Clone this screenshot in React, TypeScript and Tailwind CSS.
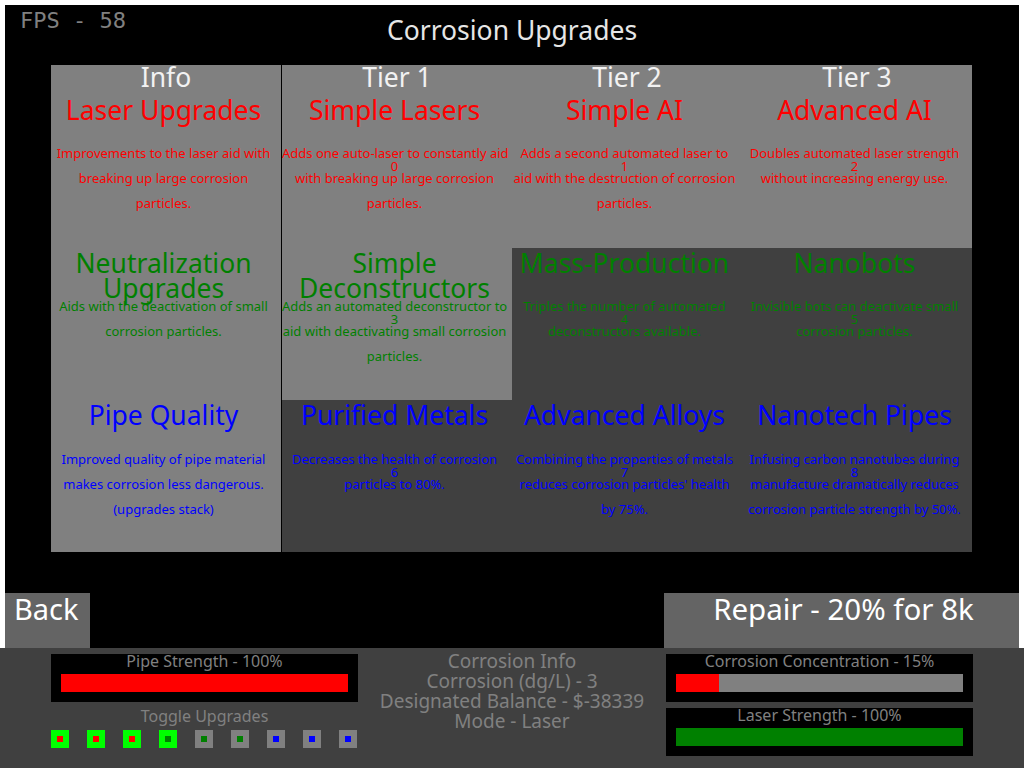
import React from "react";

type Cell = {
  title: string[];
  desc: string[];
  color: string;
  dark?: boolean;
  num?: number;
};

type Column = { header: string; cells: Cell[] };

const RED = "text-[#ff0000]";
const GREEN = "text-[#008000]";
const BLUE = "text-[#0000ff]";

const columns: Column[] = [
  {
    header: "Info",
    cells: [
      { title: ["Laser Upgrades"], color: RED, desc: ["Improvements to the laser aid with", "breaking up large corrosion", "particles."] },
      { title: ["Neutralization", "Upgrades"], color: GREEN, desc: ["Aids with the deactivation of small", "corrosion particles."] },
      { title: ["Pipe Quality"], color: BLUE, desc: ["Improved quality of pipe material", "makes corrosion less dangerous.", "(upgrades stack)"] },
    ],
  },
  {
    header: "Tier 1",
    cells: [
      { title: ["Simple Lasers"], color: RED, num: 0, desc: ["Adds one auto-laser to constantly aid", "with breaking up large corrosion", "particles."] },
      { title: ["Simple", "Deconstructors"], color: GREEN, num: 3, desc: ["Adds an automated deconstructor to", "aid with deactivating small corrosion", "particles."] },
      { title: ["Purified Metals"], color: BLUE, num: 6, dark: true, desc: ["Decreases the health of corrosion", "particles to 80%."] },
    ],
  },
  {
    header: "Tier 2",
    cells: [
      { title: ["Simple AI"], color: RED, num: 1, desc: ["Adds a second automated laser to", "aid with the destruction of corrosion", "particles."] },
      { title: ["Mass-Production"], color: GREEN, num: 4, dark: true, desc: ["Triples the number of automated", "deconstructors available."] },
      { title: ["Advanced Alloys"], color: BLUE, num: 7, dark: true, desc: ["Combining the properties of metals", "reduces corrosion particles' health", "by 75%."] },
    ],
  },
  {
    header: "Tier 3",
    cells: [
      { title: ["Advanced AI"], color: RED, num: 2, desc: ["Doubles automated laser strength", "without increasing energy use."] },
      { title: ["Nanobots"], color: GREEN, num: 5, dark: true, desc: ["Invisible bots can deactivate small", "corrosion particles."] },
      { title: ["Nanotech Pipes"], color: BLUE, num: 8, dark: true, desc: ["Infusing carbon nanotubes during", "manufacture dramatically reduces", "corrosion particle strength by 50%."] },
    ],
  },
];

// toggle squares: outer / inner colours
const toggles = [
  ["bg-[#00ff00]", "bg-[#ff0000]"],
  ["bg-[#00ff00]", "bg-[#ff0000]"],
  ["bg-[#00ff00]", "bg-[#ff0000]"],
  ["bg-[#00ff00]", "bg-[#008000]"],
  ["bg-[#808080]", "bg-[#008000]"],
  ["bg-[#808080]", "bg-[#008000]"],
  ["bg-[#808080]", "bg-[#0000ff]"],
  ["bg-[#808080]", "bg-[#0000ff]"],
  ["bg-[#808080]", "bg-[#0000ff]"],
];

// title block height grows by a pixel per row, as in the game's layout
const titleHeights = ["h-[45px] pt-[2px]", "h-[46px] pt-[3px]", "h-[47px] pt-[3px]"];
const numTops = ["top-[62px]", "top-[63px]", "top-[64px]"];

function UpgradeCell({ cell, row }: { cell: Cell; row: number }) {
  return (
    <div className={`relative h-[152px] pr-[5px] text-center ${cell.color} ${cell.dark ? "bg-[#404040]" : "bg-[#808080]"}`}>
      {/* title */}
      <div className={`${titleHeights[row]} text-[26.5px] leading-[25px] whitespace-nowrap`}>
        {cell.title.map((t) => (
          <div key={t}>{t}</div>
        ))}
      </div>
      {/* description */}
      <div className="text-[13px] leading-[25px] whitespace-nowrap">
        {cell.desc.map((d) => (
          <div key={d}>{d}</div>
        ))}
      </div>
      {cell.num !== undefined && (
        <div className={`absolute left-0 right-[5px] ${numTops[row]} text-[13px] leading-[16px]`}>{cell.num}</div>
      )}
    </div>
  );
}

function Meter({ label, fill, pct }: { label: string; fill: string; pct: number }) {
  return (
    <div className="h-[48px] bg-black px-[10px]">
      <div className="text-[16px] leading-[13px] pt-[1px] text-center text-[#808080] whitespace-nowrap">{label}</div>
      <div className="mt-[6px] h-[18px] bg-[#808080] flex">
        <div className={fill} style={{ width: `${pct}%` }} />
      </div>
    </div>
  );
}

export default function App() {
  return (
    <div className="w-[1024px] h-[768px] bg-white flex flex-col overflow-hidden" style={{ fontFamily: "'Noto Sans', 'Open Sans', sans-serif" }}>
      <div className="h-[648px] px-[5px] pt-[5px]">
        <div className="h-[643px] bg-black flex flex-col">
          {/* Header */}
          <div className="h-[60px] grid grid-cols-[1fr_auto_1fr]">
            <div className="pl-[15px] pt-[3px] text-[22px] leading-[26px] text-[#808080]" style={{ fontFamily: "'DejaVu Sans Mono', monospace" }}>
              FPS - 58
            </div>
            <div className="pt-[9px] text-[26.5px] leading-[32px] text-[#e6e6e6]">Corrosion Upgrades</div>
            <div />
          </div>

          {/* Upgrade grid */}
          <div className="ml-[46px] h-[487px] flex">
            {columns.map((col, i) => (
              <div key={col.header} className={`flex flex-col ${i === 0 ? "w-[231px] border-r border-black" : "w-[230px]"}`}>
                <div className="h-[31px] bg-[#808080] text-center text-[26.5px] leading-[24px] text-[#f2f2f2]">{col.header}</div>
                {col.cells.map((c, r) => (
                  <UpgradeCell key={c.title.join(" ")} cell={c} row={r} />
                ))}
              </div>
            ))}
          </div>

          {/* Buttons */}
          <div className="mt-[41px] h-[55px] flex justify-between">
            <div className="w-[85px] bg-[#646464] pl-[9px] text-[29px] leading-[32px] text-white">Back</div>
            <div className="w-[355px] bg-[#646464] pl-[4px] text-center text-[29.5px] leading-[32px] text-white">Repair - 20% for 8k</div>
          </div>
        </div>
      </div>

      {/* Bottom panel */}
      <div className="h-[120px] bg-[#404040] flex px-[51px]">
        <div className="w-[307px] pt-[6px]">
          <div className="h-[48px] bg-black px-[10px]">
            <div className="text-[16px] leading-[13px] pt-[1px] text-center text-[#808080]">Pipe Strength - 100%</div>
            <div className="mt-[6px] h-[18px] bg-[#ff0000]" />
          </div>
          <div className="mt-[6px] text-center text-[16px] leading-[16px] text-[#808080]">Toggle Upgrades</div>
          <div className="mt-[6px] flex gap-[18px]">
            {toggles.map(([outer, inner], i) => (
              <div key={i} className={`w-[18px] h-[18px] ${outer} flex items-center justify-center`}>
                <div className={`w-[6px] h-[6px] ${inner}`} />
              </div>
            ))}
          </div>
        </div>

        <div className="flex-1 pt-[3px] text-center text-[19px] leading-[20px] text-[#808080]">
          <div>Corrosion Info</div>
          <div>Corrosion (dg/L) - 3</div>
          <div>Designated Balance - $-38339</div>
          <div>Mode - Laser</div>
        </div>

        <div className="w-[307px] pt-[6px] flex flex-col gap-[6px]">
          <Meter label="Corrosion Concentration - 15%" fill="bg-[#ff0000]" pct={15} />
          <Meter label="Laser Strength - 100%" fill="bg-[#008000]" pct={100} />
        </div>
      </div>
    </div>
  );
}
